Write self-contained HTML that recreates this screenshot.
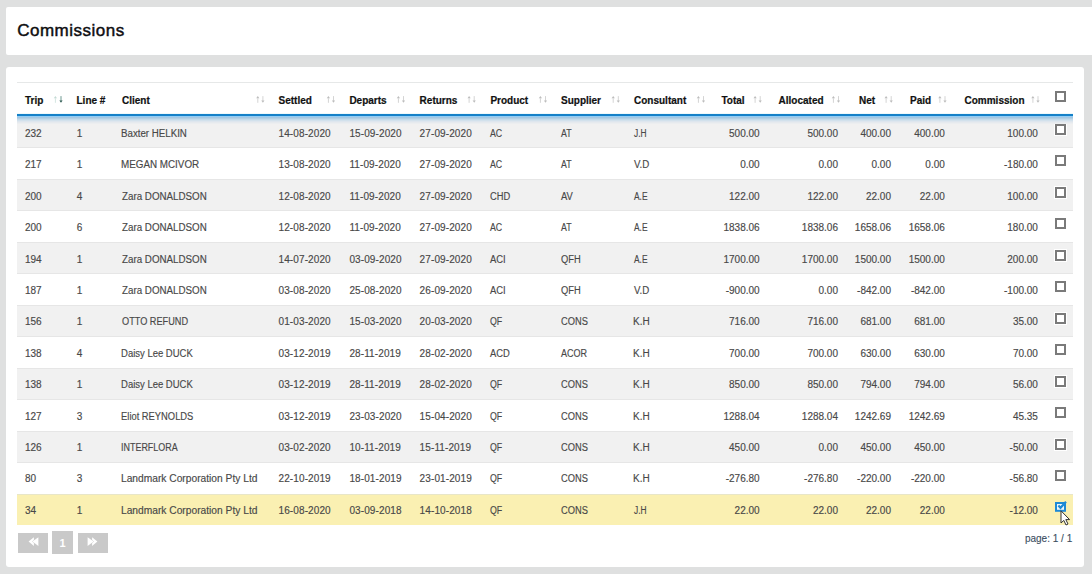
<!DOCTYPE html>
<html><head><meta charset="utf-8"><style>
html,body{margin:0;padding:0;}
body{width:1092px;height:574px;background:#dfe0e0;position:relative;overflow:hidden;font-family:"Liberation Sans",sans-serif;}
.p1{position:absolute;left:6px;top:7px;width:1086px;height:48px;background:#fff;border-radius:2px 0 0 2px;}
.p2{position:absolute;left:6px;top:67px;width:1078px;height:499.5px;background:#fff;border-radius:3px;}
.t{position:absolute;white-space:nowrap;line-height:10px;font-size:10px;color:#484848;-webkit-text-stroke:0.15px #484848;}
.h{position:absolute;white-space:nowrap;line-height:10px;font-size:10px;color:#111;font-weight:bold;-webkit-text-stroke:0.2px #111;}
.r{position:absolute;left:17px;width:1056px;}
.cb{position:absolute;width:7px;height:7px;border:2px solid #7a7a7a;background:#fff;box-shadow:0 0 0 1px #fff;}
.si{position:absolute;top:95.9px;width:9px;height:8px;overflow:visible;}
</style></head><body>
<div class="p1"></div>
<div class="p2"></div>

<div style="position:absolute;left:17.2px;top:21.82px;font-size:17px;line-height:17px;color:#0e0e10;-webkit-text-stroke:0.45px #0e0e10;letter-spacing:0.5px;white-space:nowrap;">Commissions</div>
<div style="position:absolute;left:17px;top:82px;width:1056px;height:1px;background:#e6e8e8;"></div>
<div class="h" style="left:25.0px;top:96.25px;">Trip</div>
<div class="h" style="left:76.5px;top:96.25px;">Line #</div>
<div class="h" style="left:122.0px;top:96.25px;">Client</div>
<div class="h" style="left:278.5px;top:96.25px;">Settled</div>
<div class="h" style="left:349.4px;top:96.25px;">Departs</div>
<div class="h" style="left:419.6px;top:96.25px;">Returns</div>
<div class="h" style="left:490.4px;top:96.25px;">Product</div>
<div class="h" style="left:561.0px;top:96.25px;">Supplier</div>
<div class="h" style="left:634.0px;top:96.25px;">Consultant</div>
<div class="h" style="left:721.5px;top:96.25px;">Total</div>
<div class="h" style="left:778.6px;top:96.25px;">Allocated</div>
<div class="h" style="left:859.0px;top:96.25px;">Net</div>
<div class="h" style="left:910.0px;top:96.25px;">Paid</div>
<div class="h" style="left:964.5px;top:96.25px;">Commission</div>
<div class="cb" style="left:1055.3px;top:90.5px;"></div>
<div class="r" style="top:116.00px;height:31.46px;background:#f1f1f1;box-sizing:border-box;"></div>
<div class="t" style="left:25.0px;top:128.95px;">232</div>
<div class="t" style="left:76.8px;top:128.95px;">1</div>
<div class="t" style="left:122.0px;top:128.95px;transform:scaleX(0.9712);transform-origin:1px 0;margin-left:-1px;">Baxter HELKIN</div>
<div class="t" style="left:278.5px;top:128.95px;letter-spacing:0.11px;">14-08-2020</div>
<div class="t" style="left:349.4px;top:128.95px;letter-spacing:0.11px;">15-09-2020</div>
<div class="t" style="left:419.6px;top:128.95px;letter-spacing:0.11px;">27-09-2020</div>
<div class="t" style="left:490.4px;top:128.95px;transform:scaleX(0.8786);transform-origin:0px 0;margin-left:0px;">AC</div>
<div class="t" style="left:561.0px;top:128.95px;transform:scaleX(0.8750);transform-origin:0px 0;margin-left:0px;">AT</div>
<div class="t" style="left:634.0px;top:128.95px;transform:scaleX(0.8333);transform-origin:0px 0;margin-left:0px;">J.H</div>
<div class="t" style="right:332.4px;top:128.95px;">500.00</div>
<div class="t" style="right:254.0px;top:128.95px;">500.00</div>
<div class="t" style="right:201.0px;top:128.95px;">400.00</div>
<div class="t" style="right:147.2px;top:128.95px;">400.00</div>
<div class="t" style="right:54.1px;top:128.95px;">100.00</div>
<div class="cb" style="left:1055.3px;top:123.90px;"></div>
<div class="r" style="top:147.46px;height:31.46px;background:#ffffff;box-sizing:border-box;border-top:1px solid #e6e6e6;"></div>
<div class="t" style="left:25.0px;top:160.35px;">217</div>
<div class="t" style="left:76.8px;top:160.35px;">1</div>
<div class="t" style="left:122.0px;top:160.35px;transform:scaleX(0.9833);transform-origin:1px 0;margin-left:-1px;">MEGAN MCIVOR</div>
<div class="t" style="left:278.5px;top:160.35px;letter-spacing:0.11px;">13-08-2020</div>
<div class="t" style="left:349.4px;top:160.35px;letter-spacing:0.11px;">11-09-2020</div>
<div class="t" style="left:419.6px;top:160.35px;letter-spacing:0.11px;">27-09-2020</div>
<div class="t" style="left:490.4px;top:160.35px;transform:scaleX(0.8786);transform-origin:0px 0;margin-left:0px;">AC</div>
<div class="t" style="left:561.0px;top:160.35px;transform:scaleX(0.8750);transform-origin:0px 0;margin-left:0px;">AT</div>
<div class="t" style="left:634.0px;top:160.35px;transform:scaleX(0.9688);transform-origin:0px 0;margin-left:0px;">V.D</div>
<div class="t" style="right:332.4px;top:160.35px;">0.00</div>
<div class="t" style="right:254.0px;top:160.35px;">0.00</div>
<div class="t" style="right:201.0px;top:160.35px;">0.00</div>
<div class="t" style="right:147.2px;top:160.35px;">0.00</div>
<div class="t" style="right:54.1px;top:160.35px;">-180.00</div>
<div class="cb" style="left:1055.3px;top:155.36px;"></div>
<div class="r" style="top:178.92px;height:31.46px;background:#f1f1f1;box-sizing:border-box;border-top:1px solid #e6e6e6;"></div>
<div class="t" style="left:25.0px;top:191.75px;">200</div>
<div class="t" style="left:76.8px;top:191.75px;">4</div>
<div class="t" style="left:122.0px;top:191.75px;transform:scaleX(0.9779);transform-origin:0px 0;margin-left:0px;">Zara DONALDSON</div>
<div class="t" style="left:278.5px;top:191.75px;letter-spacing:0.11px;">12-08-2020</div>
<div class="t" style="left:349.4px;top:191.75px;letter-spacing:0.11px;">11-09-2020</div>
<div class="t" style="left:419.6px;top:191.75px;letter-spacing:0.11px;">27-09-2020</div>
<div class="t" style="left:490.4px;top:191.75px;transform:scaleX(0.9318);transform-origin:0px 0;margin-left:0px;">CHD</div>
<div class="t" style="left:561.0px;top:191.75px;transform:scaleX(0.9385);transform-origin:0px 0;margin-left:0px;">AV</div>
<div class="t" style="left:634.0px;top:191.75px;transform:scaleX(0.8375);transform-origin:0px 0;margin-left:0px;">A.E</div>
<div class="t" style="right:332.4px;top:191.75px;">122.00</div>
<div class="t" style="right:254.0px;top:191.75px;">122.00</div>
<div class="t" style="right:201.0px;top:191.75px;">22.00</div>
<div class="t" style="right:147.2px;top:191.75px;">22.00</div>
<div class="t" style="right:54.1px;top:191.75px;">100.00</div>
<div class="cb" style="left:1055.3px;top:186.82px;"></div>
<div class="r" style="top:210.38px;height:31.46px;background:#ffffff;box-sizing:border-box;border-top:1px solid #e6e6e6;"></div>
<div class="t" style="left:25.0px;top:223.15px;">200</div>
<div class="t" style="left:76.8px;top:223.15px;">6</div>
<div class="t" style="left:122.0px;top:223.15px;transform:scaleX(0.9779);transform-origin:0px 0;margin-left:0px;">Zara DONALDSON</div>
<div class="t" style="left:278.5px;top:223.15px;letter-spacing:0.11px;">12-08-2020</div>
<div class="t" style="left:349.4px;top:223.15px;letter-spacing:0.11px;">11-09-2020</div>
<div class="t" style="left:419.6px;top:223.15px;letter-spacing:0.11px;">27-09-2020</div>
<div class="t" style="left:490.4px;top:223.15px;transform:scaleX(0.8786);transform-origin:0px 0;margin-left:0px;">AC</div>
<div class="t" style="left:561.0px;top:223.15px;transform:scaleX(0.8750);transform-origin:0px 0;margin-left:0px;">AT</div>
<div class="t" style="left:634.0px;top:223.15px;transform:scaleX(0.8375);transform-origin:0px 0;margin-left:0px;">A.E</div>
<div class="t" style="right:332.4px;top:223.15px;">1838.06</div>
<div class="t" style="right:254.0px;top:223.15px;">1838.06</div>
<div class="t" style="right:201.0px;top:223.15px;">1658.06</div>
<div class="t" style="right:147.2px;top:223.15px;">1658.06</div>
<div class="t" style="right:54.1px;top:223.15px;">180.00</div>
<div class="cb" style="left:1055.3px;top:218.28px;"></div>
<div class="r" style="top:241.84px;height:31.46px;background:#f1f1f1;box-sizing:border-box;border-top:1px solid #e6e6e6;"></div>
<div class="t" style="left:25.0px;top:254.55px;">194</div>
<div class="t" style="left:76.8px;top:254.55px;">1</div>
<div class="t" style="left:122.0px;top:254.55px;transform:scaleX(0.9779);transform-origin:0px 0;margin-left:0px;">Zara DONALDSON</div>
<div class="t" style="left:278.5px;top:254.55px;letter-spacing:0.11px;">14-07-2020</div>
<div class="t" style="left:349.4px;top:254.55px;letter-spacing:0.11px;">03-09-2020</div>
<div class="t" style="left:419.6px;top:254.55px;letter-spacing:0.11px;">27-09-2020</div>
<div class="t" style="left:490.4px;top:254.55px;transform:scaleX(0.9437);transform-origin:0px 0;margin-left:0px;">ACI</div>
<div class="t" style="left:561.0px;top:254.55px;transform:scaleX(0.9333);transform-origin:0px 0;margin-left:0px;">QFH</div>
<div class="t" style="left:634.0px;top:254.55px;transform:scaleX(0.8375);transform-origin:0px 0;margin-left:0px;">A.E</div>
<div class="t" style="right:332.4px;top:254.55px;">1700.00</div>
<div class="t" style="right:254.0px;top:254.55px;">1700.00</div>
<div class="t" style="right:201.0px;top:254.55px;">1500.00</div>
<div class="t" style="right:147.2px;top:254.55px;">1500.00</div>
<div class="t" style="right:54.1px;top:254.55px;">200.00</div>
<div class="cb" style="left:1055.3px;top:249.74px;"></div>
<div class="r" style="top:273.30px;height:31.46px;background:#ffffff;box-sizing:border-box;border-top:1px solid #e6e6e6;"></div>
<div class="t" style="left:25.0px;top:285.95px;">187</div>
<div class="t" style="left:76.8px;top:285.95px;">1</div>
<div class="t" style="left:122.0px;top:285.95px;transform:scaleX(0.9779);transform-origin:0px 0;margin-left:0px;">Zara DONALDSON</div>
<div class="t" style="left:278.5px;top:285.95px;letter-spacing:0.11px;">03-08-2020</div>
<div class="t" style="left:349.4px;top:285.95px;letter-spacing:0.11px;">25-08-2020</div>
<div class="t" style="left:419.6px;top:285.95px;letter-spacing:0.11px;">26-09-2020</div>
<div class="t" style="left:490.4px;top:285.95px;transform:scaleX(0.9437);transform-origin:0px 0;margin-left:0px;">ACI</div>
<div class="t" style="left:561.0px;top:285.95px;transform:scaleX(0.9333);transform-origin:0px 0;margin-left:0px;">QFH</div>
<div class="t" style="left:634.0px;top:285.95px;transform:scaleX(0.9688);transform-origin:0px 0;margin-left:0px;">V.D</div>
<div class="t" style="right:332.4px;top:285.95px;">-900.00</div>
<div class="t" style="right:254.0px;top:285.95px;">0.00</div>
<div class="t" style="right:201.0px;top:285.95px;">-842.00</div>
<div class="t" style="right:147.2px;top:285.95px;">-842.00</div>
<div class="t" style="right:54.1px;top:285.95px;">-100.00</div>
<div class="cb" style="left:1055.3px;top:281.20px;"></div>
<div class="r" style="top:304.76px;height:31.46px;background:#f1f1f1;box-sizing:border-box;border-top:1px solid #e6e6e6;"></div>
<div class="t" style="left:25.0px;top:317.35px;">156</div>
<div class="t" style="left:76.8px;top:317.35px;">1</div>
<div class="t" style="left:122.0px;top:317.35px;transform:scaleX(0.9167);transform-origin:0px 0;margin-left:0px;">OTTO REFUND</div>
<div class="t" style="left:278.5px;top:317.35px;letter-spacing:0.11px;">01-03-2020</div>
<div class="t" style="left:349.4px;top:317.35px;letter-spacing:0.11px;">15-03-2020</div>
<div class="t" style="left:419.6px;top:317.35px;letter-spacing:0.11px;">20-03-2020</div>
<div class="t" style="left:490.4px;top:317.35px;transform:scaleX(0.8786);transform-origin:0px 0;margin-left:0px;">QF</div>
<div class="t" style="left:561.0px;top:317.35px;transform:scaleX(0.9310);transform-origin:0px 0;margin-left:0px;">CONS</div>
<div class="t" style="left:634.0px;top:317.35px;transform:scaleX(1.0000);transform-origin:1px 0;margin-left:-1px;">K.H</div>
<div class="t" style="right:332.4px;top:317.35px;">716.00</div>
<div class="t" style="right:254.0px;top:317.35px;">716.00</div>
<div class="t" style="right:201.0px;top:317.35px;">681.00</div>
<div class="t" style="right:147.2px;top:317.35px;">681.00</div>
<div class="t" style="right:54.1px;top:317.35px;">35.00</div>
<div class="cb" style="left:1055.3px;top:312.66px;"></div>
<div class="r" style="top:336.22px;height:31.46px;background:#ffffff;box-sizing:border-box;border-top:1px solid #e6e6e6;"></div>
<div class="t" style="left:25.0px;top:348.75px;">138</div>
<div class="t" style="left:76.8px;top:348.75px;">4</div>
<div class="t" style="left:122.0px;top:348.75px;transform:scaleX(0.9480);transform-origin:1px 0;margin-left:-1px;">Daisy Lee DUCK</div>
<div class="t" style="left:278.5px;top:348.75px;letter-spacing:0.11px;">03-12-2019</div>
<div class="t" style="left:349.4px;top:348.75px;letter-spacing:0.11px;">28-11-2019</div>
<div class="t" style="left:419.6px;top:348.75px;letter-spacing:0.11px;">28-02-2020</div>
<div class="t" style="left:490.4px;top:348.75px;transform:scaleX(0.9381);transform-origin:0px 0;margin-left:0px;">ACD</div>
<div class="t" style="left:561.0px;top:348.75px;transform:scaleX(0.9034);transform-origin:0px 0;margin-left:0px;">ACOR</div>
<div class="t" style="left:634.0px;top:348.75px;transform:scaleX(1.0000);transform-origin:1px 0;margin-left:-1px;">K.H</div>
<div class="t" style="right:332.4px;top:348.75px;">700.00</div>
<div class="t" style="right:254.0px;top:348.75px;">700.00</div>
<div class="t" style="right:201.0px;top:348.75px;">630.00</div>
<div class="t" style="right:147.2px;top:348.75px;">630.00</div>
<div class="t" style="right:54.1px;top:348.75px;">70.00</div>
<div class="cb" style="left:1055.3px;top:344.12px;"></div>
<div class="r" style="top:367.68px;height:31.46px;background:#f1f1f1;box-sizing:border-box;border-top:1px solid #e6e6e6;"></div>
<div class="t" style="left:25.0px;top:380.15px;">138</div>
<div class="t" style="left:76.8px;top:380.15px;">1</div>
<div class="t" style="left:122.0px;top:380.15px;transform:scaleX(0.9480);transform-origin:1px 0;margin-left:-1px;">Daisy Lee DUCK</div>
<div class="t" style="left:278.5px;top:380.15px;letter-spacing:0.11px;">03-12-2019</div>
<div class="t" style="left:349.4px;top:380.15px;letter-spacing:0.11px;">28-11-2019</div>
<div class="t" style="left:419.6px;top:380.15px;letter-spacing:0.11px;">28-02-2020</div>
<div class="t" style="left:490.4px;top:380.15px;transform:scaleX(0.8786);transform-origin:0px 0;margin-left:0px;">QF</div>
<div class="t" style="left:561.0px;top:380.15px;transform:scaleX(0.9310);transform-origin:0px 0;margin-left:0px;">CONS</div>
<div class="t" style="left:634.0px;top:380.15px;transform:scaleX(1.0000);transform-origin:1px 0;margin-left:-1px;">K.H</div>
<div class="t" style="right:332.4px;top:380.15px;">850.00</div>
<div class="t" style="right:254.0px;top:380.15px;">850.00</div>
<div class="t" style="right:201.0px;top:380.15px;">794.00</div>
<div class="t" style="right:147.2px;top:380.15px;">794.00</div>
<div class="t" style="right:54.1px;top:380.15px;">56.00</div>
<div class="cb" style="left:1055.3px;top:375.58px;"></div>
<div class="r" style="top:399.14px;height:31.46px;background:#ffffff;box-sizing:border-box;border-top:1px solid #e6e6e6;"></div>
<div class="t" style="left:25.0px;top:411.55px;">127</div>
<div class="t" style="left:76.8px;top:411.55px;">3</div>
<div class="t" style="left:122.0px;top:411.55px;transform:scaleX(0.9355);transform-origin:1px 0;margin-left:-1px;">Eliot REYNOLDS</div>
<div class="t" style="left:278.5px;top:411.55px;letter-spacing:0.11px;">03-12-2019</div>
<div class="t" style="left:349.4px;top:411.55px;letter-spacing:0.11px;">23-03-2020</div>
<div class="t" style="left:419.6px;top:411.55px;letter-spacing:0.11px;">15-04-2020</div>
<div class="t" style="left:490.4px;top:411.55px;transform:scaleX(0.8786);transform-origin:0px 0;margin-left:0px;">QF</div>
<div class="t" style="left:561.0px;top:411.55px;transform:scaleX(0.9310);transform-origin:0px 0;margin-left:0px;">CONS</div>
<div class="t" style="left:634.0px;top:411.55px;transform:scaleX(1.0000);transform-origin:1px 0;margin-left:-1px;">K.H</div>
<div class="t" style="right:332.4px;top:411.55px;">1288.04</div>
<div class="t" style="right:254.0px;top:411.55px;">1288.04</div>
<div class="t" style="right:201.0px;top:411.55px;">1242.69</div>
<div class="t" style="right:147.2px;top:411.55px;">1242.69</div>
<div class="t" style="right:54.1px;top:411.55px;">45.35</div>
<div class="cb" style="left:1055.3px;top:407.04px;"></div>
<div class="r" style="top:430.60px;height:31.46px;background:#f1f1f1;box-sizing:border-box;border-top:1px solid #e6e6e6;"></div>
<div class="t" style="left:25.0px;top:442.95px;">126</div>
<div class="t" style="left:76.8px;top:442.95px;">1</div>
<div class="t" style="left:122.0px;top:442.95px;transform:scaleX(0.8921);transform-origin:1px 0;margin-left:-1px;">INTERFLORA</div>
<div class="t" style="left:278.5px;top:442.95px;letter-spacing:0.11px;">03-02-2020</div>
<div class="t" style="left:349.4px;top:442.95px;letter-spacing:0.11px;">10-11-2019</div>
<div class="t" style="left:419.6px;top:442.95px;letter-spacing:0.11px;">15-11-2019</div>
<div class="t" style="left:490.4px;top:442.95px;transform:scaleX(0.8786);transform-origin:0px 0;margin-left:0px;">QF</div>
<div class="t" style="left:561.0px;top:442.95px;transform:scaleX(0.9310);transform-origin:0px 0;margin-left:0px;">CONS</div>
<div class="t" style="left:634.0px;top:442.95px;transform:scaleX(1.0000);transform-origin:1px 0;margin-left:-1px;">K.H</div>
<div class="t" style="right:332.4px;top:442.95px;">450.00</div>
<div class="t" style="right:254.0px;top:442.95px;">0.00</div>
<div class="t" style="right:201.0px;top:442.95px;">450.00</div>
<div class="t" style="right:147.2px;top:442.95px;">450.00</div>
<div class="t" style="right:54.1px;top:442.95px;">-50.00</div>
<div class="cb" style="left:1055.3px;top:438.50px;"></div>
<div class="r" style="top:462.06px;height:31.46px;background:#ffffff;box-sizing:border-box;border-top:1px solid #e6e6e6;"></div>
<div class="t" style="left:25.0px;top:474.35px;">80</div>
<div class="t" style="left:76.8px;top:474.35px;">3</div>
<div class="t" style="left:122.0px;top:474.35px;transform:scaleX(1.0227);transform-origin:1px 0;margin-left:-1px;">Landmark Corporation Pty Ltd</div>
<div class="t" style="left:278.5px;top:474.35px;letter-spacing:0.11px;">22-10-2019</div>
<div class="t" style="left:349.4px;top:474.35px;letter-spacing:0.11px;">18-01-2019</div>
<div class="t" style="left:419.6px;top:474.35px;letter-spacing:0.11px;">23-01-2019</div>
<div class="t" style="left:490.4px;top:474.35px;transform:scaleX(0.8786);transform-origin:0px 0;margin-left:0px;">QF</div>
<div class="t" style="left:561.0px;top:474.35px;transform:scaleX(0.9310);transform-origin:0px 0;margin-left:0px;">CONS</div>
<div class="t" style="left:634.0px;top:474.35px;transform:scaleX(1.0000);transform-origin:1px 0;margin-left:-1px;">K.H</div>
<div class="t" style="right:332.4px;top:474.35px;">-276.80</div>
<div class="t" style="right:254.0px;top:474.35px;">-276.80</div>
<div class="t" style="right:201.0px;top:474.35px;">-220.00</div>
<div class="t" style="right:147.2px;top:474.35px;">-220.00</div>
<div class="t" style="right:54.1px;top:474.35px;">-56.80</div>
<div class="cb" style="left:1055.3px;top:469.96px;"></div>
<div class="r" style="top:493.52px;height:31.46px;background:#faf0b2;box-sizing:border-box;border-top:1px solid #e8e6c8;"></div>
<div class="t" style="left:25.0px;top:505.75px;">34</div>
<div class="t" style="left:76.8px;top:505.75px;">1</div>
<div class="t" style="left:122.0px;top:505.75px;transform:scaleX(1.0227);transform-origin:1px 0;margin-left:-1px;">Landmark Corporation Pty Ltd</div>
<div class="t" style="left:278.5px;top:505.75px;letter-spacing:0.11px;">16-08-2020</div>
<div class="t" style="left:349.4px;top:505.75px;letter-spacing:0.11px;">03-09-2018</div>
<div class="t" style="left:419.6px;top:505.75px;letter-spacing:0.11px;">14-10-2018</div>
<div class="t" style="left:490.4px;top:505.75px;transform:scaleX(0.8786);transform-origin:0px 0;margin-left:0px;">QF</div>
<div class="t" style="left:561.0px;top:505.75px;transform:scaleX(0.9310);transform-origin:0px 0;margin-left:0px;">CONS</div>
<div class="t" style="left:634.0px;top:505.75px;transform:scaleX(0.8333);transform-origin:0px 0;margin-left:0px;">J.H</div>
<div class="t" style="right:332.4px;top:505.75px;">22.00</div>
<div class="t" style="right:254.0px;top:505.75px;">22.00</div>
<div class="t" style="right:201.0px;top:505.75px;">22.00</div>
<div class="t" style="right:147.2px;top:505.75px;">22.00</div>
<div class="t" style="right:54.1px;top:505.75px;">-12.00</div>
<div style="position:absolute;left:17px;top:114px;width:1056px;height:2px;background:#1580c8;"></div>
<div style="position:absolute;left:17px;top:116px;width:1056px;height:8px;background:linear-gradient(to bottom,rgb(145,205,245) 0px,rgb(145,205,245) 1px,rgb(165,198,225) 1px,rgb(165,198,225) 2px,rgb(178,207,228) 2px,rgb(178,207,228) 3px,rgb(195,218,234) 3px,rgb(195,218,234) 4px,rgb(210,225,236) 4px,rgb(210,225,236) 5px,rgb(222,230,238) 5px,rgb(222,230,238) 6px,rgb(230,234,238) 6px,rgb(230,234,238) 7px,rgb(236,238,240) 7px,rgb(236,238,240) 8px);"></div>
<div style="position:absolute;left:17px;top:113px;width:1056px;height:1px;background:#eef9fb;"></div>
<svg style="position:absolute;left:0;top:0" width="1092" height="120"><path d="M55.40 95.9L53.80 98.3H57.00Z" fill="#c4dad4"/><rect x="54.90" y="98.1" width="1" height="4.7" fill="#d4e6e2"/><rect x="60.50" y="96.1" width="1" height="4.9" fill="#6f9a92"/><path d="M61.00 102.8L59.40 100.5H62.60Z" fill="#2f5a52"/><path d="M257.80 95.9L256.20 98.3H259.40Z" fill="#bdbdbd"/><rect x="257.30" y="98.1" width="1" height="4.7" fill="#d4d4d4"/><rect x="262.40" y="96.1" width="1" height="4.9" fill="#d4d4d4"/><path d="M262.90 102.8L261.30 100.5H264.50Z" fill="#bdbdbd"/><path d="M328.40 95.9L326.80 98.3H330.00Z" fill="#bdbdbd"/><rect x="327.90" y="98.1" width="1" height="4.7" fill="#d4d4d4"/><rect x="333.00" y="96.1" width="1" height="4.9" fill="#d4d4d4"/><path d="M333.50 102.8L331.90 100.5H335.10Z" fill="#bdbdbd"/><path d="M398.40 95.9L396.80 98.3H400.00Z" fill="#bdbdbd"/><rect x="397.90" y="98.1" width="1" height="4.7" fill="#d4d4d4"/><rect x="403.00" y="96.1" width="1" height="4.9" fill="#d4d4d4"/><path d="M403.50 102.8L401.90 100.5H405.10Z" fill="#bdbdbd"/><path d="M469.10 95.9L467.50 98.3H470.70Z" fill="#bdbdbd"/><rect x="468.60" y="98.1" width="1" height="4.7" fill="#d4d4d4"/><rect x="473.70" y="96.1" width="1" height="4.9" fill="#d4d4d4"/><path d="M474.20 102.8L472.60 100.5H475.80Z" fill="#bdbdbd"/><path d="M540.40 95.9L538.80 98.3H542.00Z" fill="#bdbdbd"/><rect x="539.90" y="98.1" width="1" height="4.7" fill="#d4d4d4"/><rect x="545.00" y="96.1" width="1" height="4.9" fill="#d4d4d4"/><path d="M545.50 102.8L543.90 100.5H547.10Z" fill="#bdbdbd"/><path d="M613.20 95.9L611.60 98.3H614.80Z" fill="#bdbdbd"/><rect x="612.70" y="98.1" width="1" height="4.7" fill="#d4d4d4"/><rect x="617.80" y="96.1" width="1" height="4.9" fill="#d4d4d4"/><path d="M618.30 102.8L616.70 100.5H619.90Z" fill="#bdbdbd"/><path d="M698.40 95.9L696.80 98.3H700.00Z" fill="#bdbdbd"/><rect x="697.90" y="98.1" width="1" height="4.7" fill="#d4d4d4"/><rect x="703.00" y="96.1" width="1" height="4.9" fill="#d4d4d4"/><path d="M703.50 102.8L701.90 100.5H705.10Z" fill="#bdbdbd"/><path d="M755.10 95.9L753.50 98.3H756.70Z" fill="#bdbdbd"/><rect x="754.60" y="98.1" width="1" height="4.7" fill="#d4d4d4"/><rect x="759.70" y="96.1" width="1" height="4.9" fill="#d4d4d4"/><path d="M760.20 102.8L758.60 100.5H761.80Z" fill="#bdbdbd"/><path d="M833.40 95.9L831.80 98.3H835.00Z" fill="#bdbdbd"/><rect x="832.90" y="98.1" width="1" height="4.7" fill="#d4d4d4"/><rect x="838.00" y="96.1" width="1" height="4.9" fill="#d4d4d4"/><path d="M838.50 102.8L836.90 100.5H840.10Z" fill="#bdbdbd"/><path d="M886.10 95.9L884.50 98.3H887.70Z" fill="#bdbdbd"/><rect x="885.60" y="98.1" width="1" height="4.7" fill="#d4d4d4"/><rect x="890.70" y="96.1" width="1" height="4.9" fill="#d4d4d4"/><path d="M891.20 102.8L889.60 100.5H892.80Z" fill="#bdbdbd"/><path d="M939.90 95.9L938.30 98.3H941.50Z" fill="#bdbdbd"/><rect x="939.40" y="98.1" width="1" height="4.7" fill="#d4d4d4"/><rect x="944.50" y="96.1" width="1" height="4.9" fill="#d4d4d4"/><path d="M945.00 102.8L943.40 100.5H946.60Z" fill="#bdbdbd"/><path d="M1032.90 95.9L1031.30 98.3H1034.50Z" fill="#bdbdbd"/><rect x="1032.40" y="98.1" width="1" height="4.7" fill="#d4d4d4"/><rect x="1037.50" y="96.1" width="1" height="4.9" fill="#d4d4d4"/><path d="M1038.00 102.8L1036.40 100.5H1039.60Z" fill="#bdbdbd"/></svg>
<svg style="position:absolute;left:1054.3px;top:499px" width="14" height="14" viewBox="0 0 14 14"><rect x="2" y="4" width="9" height="7.8" fill="#eef6fb" stroke="#1e8ad6" stroke-width="2"/><path d="M4.4 6.6L6.5 8.8L12 2.8" fill="none" stroke="#1e8ad6" stroke-width="2.2"/></svg>
<svg style="position:absolute;left:1059.5px;top:510.3px" width="12" height="16" viewBox="0 0 12 16"><path d="M1 0.8V13L3.8 10.4L6 15L8 14L5.8 9.6H9.6Z" fill="#fff" stroke="#333" stroke-width="1"/></svg>
<div style="position:absolute;left:18px;top:532.6px;width:30px;height:20px;background:#c9c9c9;"></div>
<div style="position:absolute;left:52.3px;top:530.6px;width:21px;height:23.6px;background:#c9c9c9;"></div>
<div style="position:absolute;left:78px;top:532.6px;width:30px;height:20px;background:#c9c9c9;"></div>
<svg style="position:absolute;left:0;top:0" width="120" height="574"><path d="M28.6 541.5L33.9 537.2V545.9Z" fill="#fff"/><path d="M32.4 541.5L38.4 537.2V545.9Z" fill="#fff" stroke="#c9c9c9" stroke-width="0.8" paint-order="stroke"/><path d="M97.4 541.5L92.1 537.2V545.9Z" fill="#fff"/><path d="M93.6 541.5L87.6 537.2V545.9Z" fill="#fff" stroke="#c9c9c9" stroke-width="0.8" paint-order="stroke"/></svg>
<div style="position:absolute;left:59.5px;top:538.25px;font-size:11px;line-height:11px;color:#fff;font-weight:bold;white-space:nowrap;">1</div>
<div class="t" style="right:19.8px;top:533.75px;color:#3a4d60;-webkit-text-stroke:0.1px #3a4d60;">page: 1 / 1</div>
</body></html>
